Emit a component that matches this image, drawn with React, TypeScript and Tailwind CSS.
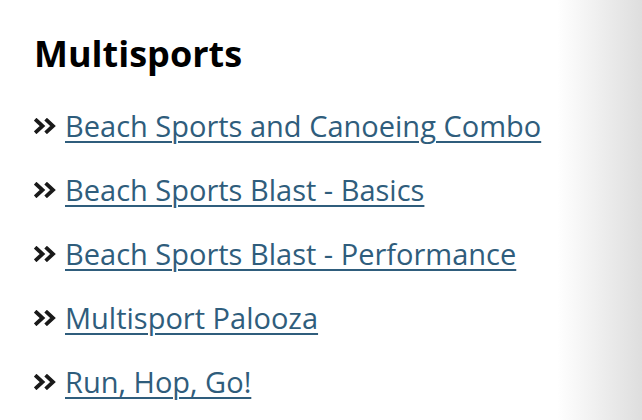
const links = [
  "Beach Sports and Canoeing Combo",
  "Beach Sports Blast - Basics",
  "Beach Sports Blast - Performance",
  "Multisport Palooza",
  "Run, Hop, Go!",
];

function Chevrons() {
  return (
    <svg width="22" height="16" viewBox="0 0 22 16" className="shrink-0">
      <path d="M2.5 2.5 L8.5 8 L2.5 13.5" fill="none" stroke="#1a1a1a" strokeWidth="3.8" strokeLinecap="square" />
      <path d="M13 2.5 L19 8 L13 13.5" fill="none" stroke="#1a1a1a" strokeWidth="3.8" strokeLinecap="square" />
    </svg>
  );
}

export default function App() {
  return (
    <div className="relative h-[420px] w-[642px] overflow-hidden bg-white font-['Open_Sans',sans-serif]">
      <div className="px-[34px] pt-[30px]">
        <h2 className="text-[36px] font-bold leading-[48px] text-black">Multisports</h2>
        <ul className="mt-[30px] flex flex-col gap-[28px]">
          {links.map((l) => (
            <li key={l} className="flex items-center gap-[9px] leading-[36px]">
              <Chevrons />
              <a
                href="#"
                className="text-[29px] text-[#2f5d7c] underline decoration-2 underline-offset-[4px]"
              >
                {l}
              </a>
            </li>
          ))}
        </ul>
      </div>
      <div className="pointer-events-none absolute right-0 top-0 h-full w-[85px] bg-gradient-to-r from-white/0 to-[#dedede]" />
    </div>
  );
}
